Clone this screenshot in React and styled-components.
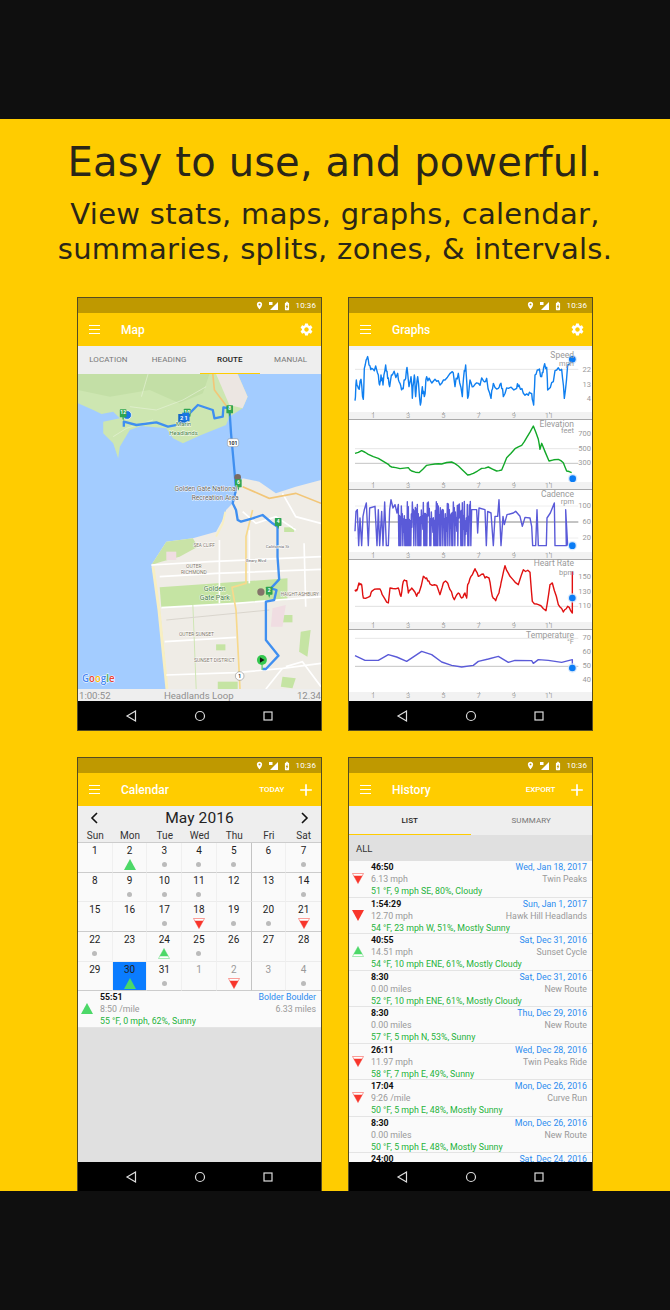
import React from "react";
import styled, { createGlobalStyle } from "styled-components";
import { MdSettings, MdAdd, MdLocationOn, MdBatteryChargingFull } from "react-icons/md";

const GlobalStyle = createGlobalStyle`
  html, body { margin: 0; padding: 0; background: #0f0f0f; }
  * { box-sizing: border-box; }
`;

/* ---------- data ---------- */

const CALENDAR = [
  [["1"], ["2", "up"], ["3", "dot"], ["4", "dot"], ["5", "dot"], ["6"], ["7", "dot"]],
  [["8"], ["9", "dot"], ["10", "dot"], ["11", "dot"], ["12"], ["13"], ["14", "dot"]],
  [["15"], ["16"], ["17", "dot"], ["18", "downOutline"], ["19", "dot"], ["20", "dot"], ["21", "downOutline"]],
  [["22", "dot"], ["23"], ["24", "upOutline"], ["25", "dot"], ["26"], ["27"], ["28"]],
  [["29"], ["30", "up"], ["31", "dot"], ["1", null, true], ["2", "downOutline", true], ["3", null, true], ["4", "dot", true]],
];

const HISTORY = [
  { time: "46:50", date: "Wed, Jan 18, 2017", pace: "6.13 mph", name: "Twin Peaks", weather: "51 °F, 9 mph SE, 80%, Cloudy", mark: "downOutline" },
  { time: "1:54:29", date: "Sun, Jan 1, 2017", pace: "12.70 mph", name: "Hawk Hill Headlands", weather: "54 °F, 23 mph W, 51%, Mostly Sunny", mark: "down" },
  { time: "40:55", date: "Sat, Dec 31, 2016", pace: "14.51 mph", name: "Sunset Cycle", weather: "54 °F, 10 mph ENE, 61%, Mostly Cloudy", mark: "upOutline" },
  { time: "8:30", date: "Sat, Dec 31, 2016", pace: "0.00 miles", name: "New Route", weather: "52 °F, 10 mph ENE, 61%, Mostly Cloudy" },
  { time: "8:30", date: "Thu, Dec 29, 2016", pace: "0.00 miles", name: "New Route", weather: "57 °F, 5 mph N, 53%, Sunny" },
  { time: "26:11", date: "Wed, Dec 28, 2016", pace: "11.97 mph", name: "Twin Peaks Ride", weather: "58 °F, 7 mph E, 49%, Sunny", mark: "downOutline" },
  { time: "17:04", date: "Mon, Dec 26, 2016", pace: "9:26 /mile", name: "Curve Run", weather: "50 °F, 5 mph E, 48%, Mostly Sunny", mark: "downOutline" },
  { time: "8:30", date: "Mon, Dec 26, 2016", pace: "0.00 miles", name: "New Route", weather: "50 °F, 5 mph E, 48%, Mostly Sunny" },
  { time: "24:00", date: "Sat, Dec 24, 2016", pace: "", name: "", weather: "" },
];

// adds small deterministic wobble between the traced points
const roughen = (points, amp, steps) => {
  const pts = points.split(" ").map((p) => p.split(",").map(Number));
  let seed = 31;
  const out = [];
  pts.forEach(([x, y], i) => {
    out.push(`${x},${y}`);
    if (i === pts.length - 1) return;
    const [nx, ny] = pts[i + 1];
    for (let s = 1; s <= steps; s++) {
      seed = (seed * 137 + 59) % 251;
      const t = s / (steps + 1);
      const off = ((seed % 21) / 10 - 1) * amp;
      out.push(`${x + (nx - x) * t},${y + (ny - y) * t + off}`);
    }
  });
  return out.join(" ");
};

// cadence drops to the floor all the time, so the first part is generated
const cadencePoints = () => {
  const pts = ["30,140 33,80 37,75 41,183 45,100 50,183 54,95 58,75 64,55 70,183 74,70 90,65 96,183 100,75 104,183 110,80 114,183 119,52 124,183 130,183 134,75 138,45 144,70 150,60 156,85"];
  let seed = 17;
  for (let x = 160; x < 378; x += 3) {
    seed = (seed * 137 + 59) % 251;
    const top = 50 + (seed % 60);
    const floor = seed % 3 !== 2;
    pts.push(`${x},${top}`);
    pts.push(`${x + 1.5},${floor ? 183 : top + 40}`);
  }
  pts.push("380,75 395,75 398,145 402,70 420,75 424,183 428,80 438,85 445,183 450,95 458,95 462,45 468,183 474,95 478,120 486,90 505,85 512,80 525,95 532,125 540,98 555,100 560,125 563,183 572,183 576,75 580,183 604,183 606,100 616,85 628,55 630,183 664,183 662,75 668,183");
  return pts.join(" ");
};

const GRAPHS = [
  {
    title: "Speed", unit: "mph", color: "#0f7ff0", top: 180, first: true,
    titleY: 195, unitY: 222, dot: [682, 208],
    lines: [[238, "#e6e6e6"]],
    labels: [["22", 240], ["13", 284], ["4", 328]],
    points: roughen("30,332 34,270 40,295 48,268 55,328 58,235 66,205 72,225 80,235 92,228 100,255 104,285 108,255 114,285 122,225 128,265 134,290 142,255 158,250 165,280 172,295 180,270 186,232 192,290 198,260 202,325 208,255 212,320 218,260 226,345 232,290 238,320 245,260 256,272 270,268 285,285 300,270 322,245 330,290 340,250 352,320 356,260 362,225 368,325 375,270 385,290 400,280 415,272 425,265 438,325 445,280 460,295 468,280 475,320 490,295 515,295 522,285 535,310 550,316 560,310 566,345 570,255 580,240 590,260 596,232 605,232 608,300 620,278 635,240 650,238 658,325 668,225 682,210", 12, 2),
  },
  {
    title: "Elevation", unit: "feet", color: "#12a828", top: 392,
    titleY: 403, unitY: 426, dot: [683, 568],
    lines: [[478, "#e6e6e6"], [522, "#c4c4c4"]],
    labels: [["700", 433], ["500", 478], ["300", 522]],
    points: roughen("30,492 50,484 70,495 100,507 130,525 140,533 165,538 190,535 200,545 222,550 245,528 270,524 290,524 320,518 340,530 368,557 385,552 410,537 430,533 455,545 470,542 485,505 510,478 530,468 545,445 565,410 580,450 585,480 590,462 612,515 640,510 655,520 665,545 680,550", 1.5, 1),
  },
  {
    title: "Cadence", unit: "rpm", color: "#5a5ad8", top: 16,
    titleY: 28, unitY: 52, dot: [682, 183],
    lines: [[64, "#eeeeee"], [112, "#888888"], [160, "#eeeeee"]],
    labels: [["100", 64], ["60", 112], ["20", 160]],
    points: cadencePoints(),
  },
  {
    title: "Heart Rate", unit: "bpm", color: "#e01010", top: 156,
    titleY: 166, unitY: 194, dot: [682, 270],
    lines: [[295, "#e0e0e0"]],
    labels: [["150", 207], ["130", 251], ["110", 295]],
    points: roughen("30,245 35,248 42,225 50,230 55,270 75,265 80,250 105,243 115,265 130,285 135,240 160,240 168,265 175,220 185,218 190,255 200,240 215,265 225,245 235,205 245,210 255,228 275,232 285,260 295,225 305,222 315,245 328,275 340,255 350,270 360,255 365,270 368,230 378,205 390,182 400,205 415,198 420,210 432,210 442,265 452,278 462,255 468,225 480,173 495,205 520,230 535,185 555,193 562,280 580,290 603,308 615,230 622,225 640,290 655,312 668,295 682,315", 4, 2) + " 682,190",
  },
  {
    title: "Temperature", unit: "°F", color: "#5a5ad8", top: 366,
    titleY: 381, unitY: 403, dot: [682, 480],
    lines: [[391, "#e6e6e6"], [475, "#c4c4c4"]],
    labels: [["70", 391], ["60", 433], ["50", 475], ["40", 515]],
    points: "30,443 60,457 100,457 130,440 155,447 185,460 230,430 260,440 290,462 320,472 350,477 385,472 400,460 430,453 460,445 490,463 510,457 560,458 565,466 580,455 610,457 650,463 682,455 682,480",
  },
];

/* ---------- small drawings ---------- */

const Triangle = ({ kind }) => {
  const up = kind.startsWith("up");
  const color = up ? "#4cd868" : "#f8352b";
  const outline = kind.endsWith("Outline");
  return (
    <svg width="12" height="11" viewBox="0 0 12 11">
      <g transform={up ? undefined : "rotate(180 6 5.5)"}>
        {outline && <polygon points="6,0.5 11.5,10.5 0.5,10.5" fill="#fff" stroke={color} strokeWidth="0.6" opacity="0.8" />}
        <polygon points={outline ? "6,0.5 10.3,8.2 1.7,8.2" : "6,0 12,11 0,11"} fill={color} />
      </g>
    </svg>
  );
};

const Status = () => (
  <StatusBar>
    <MdLocationOn size={9} />
    <svg width="10" height="8" viewBox="0 0 10 8">
      <polygon points="10,0 10,8 2,8" fill="#fff" />
      <rect x="1" y="0" width="3.5" height="3" fill="#fff" />
    </svg>
    <MdBatteryChargingFull size={10} />
    <StatusTime>10:36</StatusTime>
  </StatusBar>
);

const BottomNav = () => (
  <NavBar>
    <svg width="16" height="14" viewBox="0 0 16 14">
      <polygon points="12.5,2 12.5,12 4,7" fill="none" stroke="#ddd" strokeWidth="1.2" />
    </svg>
    <svg width="16" height="14" viewBox="0 0 16 14">
      <circle cx="8" cy="7" r="4.5" fill="none" stroke="#ddd" strokeWidth="1.2" />
    </svg>
    <svg width="16" height="14" viewBox="0 0 16 14">
      <rect x="4" y="3" width="8" height="8" fill="none" stroke="#ddd" strokeWidth="1.2" />
    </svg>
  </NavBar>
);

const Burger = () => (
  <BurgerBox>
    <span />
    <span />
    <span />
  </BurgerBox>
);

const MapMarker = ({ x, y, label, fill = "#2fa551" }) => (
  <g>
    <rect x={x - 10} y={y} width="20" height="24" rx="2" fill={fill} />
    <polygon points={`${x - 3},${y + 24} ${x + 3},${y + 24} ${x},${y + 34}`} fill={fill} />
    <text x={x} y={y + 15} fontSize="15" fontFamily="Roboto, sans-serif" fontWeight="700" fill="#fff" textAnchor="middle">{label}</text>
  </g>
);

const MapLabel = ({ x, y, color = "#5f5f5f", size = 18, children }) => (
  <text x={x} y={y} fontSize={size} fontFamily="Roboto, sans-serif" fill={color} stroke="#fff" strokeWidth="2.5" paintOrder="stroke" textAnchor="middle">{children}</text>
);

// drawn in 3x page units, same scale the route was measured at
const RouteMap = () => (
  <MapSvg viewBox="24 252 732 945" preserveAspectRatio="none">
    <rect x="24" y="252" width="732" height="945" fill="#a3ccff" />
    <polygon fill="#cde6b1" points="24,252 505,252 535,320 520,355 480,380 470,405 395,435 340,460 310,445 290,415 215,408 180,420 150,470 145,505 130,460 100,430 100,395 150,385 130,365 95,372 70,360 24,340" />
    <polygon fill="#c3dfa6" points="24,252 420,252 400,310 330,340 240,300 120,320 24,300" />
    <polygon fill="#ece6e2" points="440,252 505,252 535,320 520,355 480,345" />
    <g fill="none" stroke="#e6f2d6" strokeWidth="2">
      <polyline points="180,350 260,360 340,330 410,290" />
      <polyline points="130,440 170,415 250,390" />
      <polyline points="235,252 215,320" />
    </g>
    <polygon fill="#efece6" points="500,590 520,565 570,575 620,610 680,590 756,570 756,1197 290,1197 285,1100 270,950 245,825 290,755 370,745 440,725 465,680 470,660 490,640" />
    <polygon fill="#c9e3a7" points="245,825 290,755 370,745 385,770 330,800 275,815" />
    <polygon fill="#c5e4a3" points="270,892 655,865 655,930 275,953" />
    <polyline fill="none" stroke="#f8efc2" strokeWidth="9" points="250,830 268,960 282,1100 292,1197" />
    <polyline fill="none" stroke="#f8efc2" strokeWidth="6" points="440,740 460,700 468,665" />
    <g fill="#c5e4a3">
      <rect x="440" y="1063" width="28" height="18" />
      <rect x="445" y="1175" width="60" height="22" />
      <polygon points="695,1025 725,1020 715,1100 690,1085" />
      <polygon points="640,1160 680,1165 670,1195 635,1190" />
      <rect x="640" y="975" width="30" height="22" />
      <rect x="645" y="712" width="30" height="14" />
    </g>
    <g fill="#f0dde2">
      <polygon points="610,955 650,945 640,1010 605,1010" />
      <rect x="290" y="785" width="30" height="25" />
    </g>
    <g fill="none" stroke="#fff" strokeWidth="5">
      <polyline points="245,825 420,815 756,800" />
      <polyline points="270,860 440,850 756,838" />
      <polyline points="275,953 500,940 756,920" />
      <polyline points="285,1055 500,1042" />
      <polyline points="290,1155 500,1148 640,1135 756,1120" />
      <polyline points="450,750 450,940" />
      <polyline points="540,720 540,880" />
      <polyline points="705,760 710,950" />
      <polyline points="650,1130 700,1115 756,1190" />
      <polyline points="590,1197 640,1135" />
      <polyline points="640,610 680,680 756,700" />
      <polyline points="520,665 560,700 620,680 680,720" />
    </g>
    <polyline fill="none" stroke="#cfe6b5" strokeWidth="3" points="370,945 380,1197" />
    <polyline fill="none" stroke="#d9d5cd" strokeWidth="3" points="290,990 600,960" />
    <g fill="none" stroke="#f2c678" strokeWidth="5">
      <polyline points="430,252 435,300 480,360" />
      <polyline points="520,590 600,625 680,610 756,640" />
    </g>
    <polyline fill="none" stroke="#f7d98c" strokeWidth="5" points="550,660 530,740 530,880 488,892 500,960 512,1197" />
    <polyline fill="none" stroke="#3f8ff0" strokeWidth="7" strokeLinejoin="round" points="162,410 162,395 200,405 260,397 295,410 345,400 360,370 385,345 430,360 435,385 460,380 462,352 480,355 485,430 495,540 500,600 490,640 500,660 505,690 515,695 550,685 580,675 610,700 625,710 625,800 630,868 605,895 622,900 615,930 590,935 590,1050 628,1097 590,1137 580,1137" />
    <circle cx="172" cy="375" r="13" fill="#1976e3" stroke="#fff" strokeWidth="2" />
    <MapMarker x={160} y={358} label="12" />
    <MapMarker x={353} y={356} label="10" />
    <rect x="326" y="372" width="24" height="26" fill="#1567c6" />
    <rect x="338" y="368" width="22" height="26" fill="#1976e3" />
    <text x="343" y="390" fontSize="17" fontFamily="Roboto, sans-serif" fontWeight="700" fill="#fff" textAnchor="middle">2 1</text>
    <MapMarker x={481} y={346} label="8" />
    <circle cx="505" cy="562" r="10" fill="#7a6a62" />
    <MapMarker x={507} y={568} label="6" />
    <MapMarker x={627} y={684} label="4" />
    <MapMarker x={600} y={890} label="2" />
    <circle cx="575" cy="906" r="11" fill="#84736a" />
    <circle cx="578" cy="1110" r="15" fill="#35c84f" />
    <polygon points="572,1102 572,1118 586,1110" fill="#111" />
    <rect x="577" y="1124" width="3" height="16" fill="#35c84f" />
    <rect x="474" y="446" width="34" height="24" rx="7" fill="#fff" stroke="#888" strokeWidth="1.5" />
    <text x="491" y="464" fontSize="16" fontFamily="Roboto, sans-serif" fontWeight="700" fill="#333" textAnchor="middle">101</text>
    <circle cx="511" cy="1158" r="13" fill="#fff" stroke="#777" strokeWidth="1.5" />
    <text x="511" y="1164" fontSize="15" fontFamily="Roboto, sans-serif" fontWeight="700" fill="#333" textAnchor="middle">1</text>
    <MapLabel x={342} y={407} color="#3f7d3a">Marin</MapLabel>
    <MapLabel x={342} y={434} color="#3f7d3a">Headlands</MapLabel>
    <MapLabel x={409} y={603} size={20}>Golden Gate National</MapLabel>
    <MapLabel x={437} y={630} size={20}>Recreation Area</MapLabel>
    <MapLabel x={404} y={772} size={14} color="#7d7465">SEA CLIFF</MapLabel>
    <MapLabel x={373} y={834} size={15} color="#7d7465">OUTER</MapLabel>
    <MapLabel x={373} y={852} size={15} color="#7d7465">RICHMOND</MapLabel>
    <MapLabel x={560} y={817} size={13}>Geary Blvd</MapLabel>
    <MapLabel x={625} y={774} size={13}>California St</MapLabel>
    <MapLabel x={436} y={904} color="#3f7d3a" size={21}>Golden</MapLabel>
    <MapLabel x={436} y={931} color="#3f7d3a" size={21}>Gate Park</MapLabel>
    <MapLabel x={692} y={917} size={14} color="#7d7465">HAIGHT-ASHBURY</MapLabel>
    <MapLabel x={381} y={1038} size={15} color="#7d7465">OUTER SUNSET</MapLabel>
    <MapLabel x={435} y={1115} size={15} color="#7d7465">SUNSET DISTRICT</MapLabel>
    <text x="36" y="1175" fontSize="30" fontFamily="'Open Sans', sans-serif" fontWeight="600" stroke="#fff" strokeWidth="3" paintOrder="stroke" textLength="98" lengthAdjust="spacingAndGlyphs">
      <tspan fill="#4285f4">G</tspan>
      <tspan fill="#ea4335">o</tspan>
      <tspan fill="#fbbc05">o</tspan>
      <tspan fill="#4285f4">g</tspan>
      <tspan fill="#34a853">l</tspan>
      <tspan fill="#ea4335">e</tspan>
    </text>
  </MapSvg>
);

const Graph = ({ title, unit, color, top, first, titleY, unitY, dot, lines, labels, points }) => (
  <GraphPanel $first={first}>
    <Plot>
      <svg width="244" height="62" viewBox={`12 ${top} 732 186`} preserveAspectRatio="none">
        {lines.map(([y, c]) => (
          <line key={y} x1="30" x2="700" y1={y} y2={y} stroke={c} strokeWidth="3" />
        ))}
        <polyline points={points} fill="none" stroke={color} strokeWidth="4.2" strokeLinejoin="round" />
        <circle cx={dot[0]} cy={dot[1]} r="14" fill="#cfe3fb" opacity="0.8" />
        <circle cx={dot[0]} cy={dot[1]} r="10" fill="#0a7cf5" />
      </svg>
      <PlotTitle style={{ top: (titleY - top) / 3 }}>{title}</PlotTitle>
      <PlotTitle style={{ top: (unitY - top) / 3 }} $small>{unit}</PlotTitle>
      {labels.map(([text, y]) => (
        <AxisValue key={text} style={{ top: (y - top) / 3 }}>{text}</AxisValue>
      ))}
    </Plot>
    <AxisStrip>
      {["1", "3", "5", "7", "9", "11"].map((n) => (
        <AxisTick key={n}>{n}</AxisTick>
      ))}
    </AxisStrip>
  </GraphPanel>
);

const ActivityRow = ({ time, date, pace, name, weather, mark }) => (
  <Row>
    <RowMark>{mark && <Triangle kind={mark} />}</RowMark>
    <RowLine>
      <Time>{time}</Time>
      <DateText>{date}</DateText>
    </RowLine>
    <RowLine>
      <Muted>{pace}</Muted>
      <Muted>{name}</Muted>
    </RowLine>
    <Weather>{weather}</Weather>
  </Row>
);

const MapScreen = () => (
  <Phone>
    <Status />
    <AppBar>
      <Burger />
      <AppTitle>Map</AppTitle>
      <AppActions>
        <GearIcon size={15} color="#fff" />
      </AppActions>
    </AppBar>
    <Tabs $height={28}>
      <Tab>LOCATION</Tab>
      <Tab>HEADING</Tab>
      <Tab $active>ROUTE</Tab>
      <Tab>MANUAL</Tab>
    </Tabs>
    <MapArea>
      <RouteMap />
    </MapArea>
    <MapFooter>
      <span>1:00:52</span>
      <FooterName>Headlands Loop</FooterName>
      <span>12.34</span>
    </MapFooter>
    <BottomNav />
  </Phone>
);

const GraphsScreen = () => (
  <Phone>
    <Status />
    <AppBar>
      <Burger />
      <AppTitle>Graphs</AppTitle>
      <AppActions>
        <GearIcon size={15} color="#fff" />
      </AppActions>
    </AppBar>
    <GraphList>
      {GRAPHS.map((g) => (
        <Graph key={g.title} {...g} />
      ))}
    </GraphList>
    <BottomNav />
  </Phone>
);

const CalendarScreen = () => (
  <Phone>
    <Status />
    <AppBar>
      <Burger />
      <AppTitle>Calendar</AppTitle>
      <AppActions>
        <ActionText>TODAY</ActionText>
        <MdAdd size={20} color="#fff" />
      </AppActions>
    </AppBar>
    <MonthHeader>
      <svg width="8" height="12" viewBox="0 0 8 12">
        <polyline points="7,1 2,6 7,11" fill="none" stroke="#111" strokeWidth="1.6" />
      </svg>
      <MonthName>May 2016</MonthName>
      <svg width="8" height="12" viewBox="0 0 8 12">
        <polyline points="1,1 6,6 1,11" fill="none" stroke="#111" strokeWidth="1.6" />
      </svg>
    </MonthHeader>
    <WeekHeader>
      {["Sun", "Mon", "Tue", "Wed", "Thu", "Fri", "Sat"].map((d) => (
        <span key={d}>{d}</span>
      ))}
    </WeekHeader>
    <CalGrid>
      {CALENDAR.map((week, r) =>
        week.map(([day, mark, muted], c) => (
          <Cell key={`${r}-${c}`} $strongBottom={r % 2 === 0} $col={c} $selected={day === "30"}>
            <CellDay $muted={muted}>{day}</CellDay>
            <CellMark>{mark === "dot" ? <Dot /> : mark && <Triangle kind={mark} />}</CellMark>
          </Cell>
        ))
      )}
    </CalGrid>
    <ActivityRow
      time="55:51"
      date="Bolder Boulder"
      pace="8:50 /mile"
      name="6.33 miles"
      weather="55 °F, 0 mph, 62%, Sunny"
      mark="up"
    />
    <Filler />
    <BottomNav />
  </Phone>
);

const HistoryScreen = () => (
  <Phone>
    <Status />
    <AppBar>
      <Burger />
      <AppTitle>History</AppTitle>
      <AppActions>
        <ActionText>EXPORT</ActionText>
        <MdAdd size={20} color="#fff" />
      </AppActions>
    </AppBar>
    <Tabs $height={29}>
      <Tab $active>LIST</Tab>
      <Tab>SUMMARY</Tab>
    </Tabs>
    <FilterBar>ALL</FilterBar>
    <HistoryList>
      {HISTORY.map((h, i) => (
        <ActivityRow key={i} {...h} />
      ))}
    </HistoryList>
    <BottomNav />
  </Phone>
);

export default function App() {
  return (
    <Page>
      <GlobalStyle />
      <Band />
      <Main>
        <Headline>Easy to use, and powerful.</Headline>
        <Subhead>
          View stats, maps, graphs, calendar,
          <br />
          summaries, splits, zones, &amp; intervals.
        </Subhead>
        <PhoneGrid>
          <MapScreen />
          <GraphsScreen />
          <CalendarScreen />
          <HistoryScreen />
        </PhoneGrid>
      </Main>
      <Band />
    </Page>
  );
}

/* ---------- styles ---------- */

const Page = styled.div`
  width: 670px;
  height: 1310px;
  display: flex;
  flex-direction: column;
  overflow: hidden;
  font-family: Roboto, sans-serif;
`;
const Band = styled.div`
  height: 119px;
  flex: none;
  background: #0f0f0f;
`;
const Main = styled.div`
  height: 1072px;
  flex: none;
  background: #ffcc00;
  display: flex;
  flex-direction: column;
  align-items: center;
  padding-top: 18px;
  overflow: hidden;
`;
const Headline = styled.h1`
  margin: 0;
  font-family: "DejaVu Sans", sans-serif;
  font-weight: 400;
  font-size: 40px;
  line-height: 50px;
  letter-spacing: 0.15px;
  color: #2a2618;
  white-space: nowrap;
`;
const Subhead = styled.h2`
  margin: 0;
  padding-top: 10px;
  font-family: "DejaVu Sans", sans-serif;
  font-weight: 400;
  font-size: 29px;
  line-height: 35px;
  letter-spacing: 0.3px;
  text-align: center;
  color: #2a2618;
  white-space: nowrap;
`;
// second row runs past the yellow band and gets cut off there
const PhoneGrid = styled.div`
  margin-top: 30px;
  display: grid;
  grid-template-columns: 245px 245px;
  grid-template-rows: 434px 435px;
  gap: 26px;
  flex: none;
`;
const Phone = styled.div`
  display: flex;
  flex-direction: column;
  border: 1px solid #544b22;
  overflow: hidden;
  background: #fff;
`;
const StatusBar = styled.div`
  height: 15px;
  flex: none;
  background: #bf9900;
  color: #fff;
  display: flex;
  align-items: center;
  justify-content: flex-end;
  gap: 4px;
  padding-right: 5px;
`;
const StatusTime = styled.span`
  font-size: 8px;
  font-weight: 400;
  letter-spacing: 0.1px;
`;
const AppBar = styled.div`
  height: 33px;
  flex: none;
  background: #ffcc00;
  display: flex;
  align-items: center;
  padding: 0 5px 0 11px;
`;
const BurgerBox = styled.div`
  width: 11px;
  display: flex;
  flex-direction: column;
  gap: 2.8px;
  span {
    display: block;
    height: 1px;
    background: #fff;
  }
`;
const AppTitle = styled.div`
  margin-left: 21px;
  color: #fff;
  font-size: 12px;
  font-weight: 500;
`;
const AppActions = styled.div`
  margin-left: auto;
  display: flex;
  align-items: center;
  gap: 11.5px;
`;
const GearIcon = styled(MdSettings)`
  margin-right: 2.5px;
`;
const ActionText = styled.span`
  color: #fff;
  font-size: 8px;
  font-weight: 500;
`;
const Tabs = styled.div`
  height: ${(p) => p.$height}px;
  flex: none;
  display: flex;
  background: #eeeeee;
`;
const Tab = styled.div`
  flex: 1;
  display: flex;
  align-items: center;
  justify-content: center;
  font-size: 8px;
  letter-spacing: 0.1px;
  color: ${(p) => (p.$active ? "#222" : "#777")};
  font-weight: ${(p) => (p.$active ? 500 : 400)};
  border-bottom: 1px solid ${(p) => (p.$active ? "#ffcc00" : "transparent")};
`;
const MapArea = styled.div`
  height: 315px;
  flex: none;
  overflow: hidden;
`;
const MapSvg = styled.svg`
  display: block;
  width: 100%;
  height: 100%;
`;
const MapFooter = styled.div`
  height: 12px;
  flex: none;
  background: #eeeeee;
  display: flex;
  justify-content: space-between;
  align-items: center;
  padding-left: 1px;
  font-size: 9.6px;
  color: #8e8e8e;
  white-space: nowrap;
`;
const FooterName = styled.span`
  margin-right: 10px;
`;
const NavBar = styled.div`
  height: 29px;
  flex: none;
  background: #000;
  display: flex;
  align-items: center;
  justify-content: center;
  gap: 52.5px;
`;
const GraphList = styled.div`
  flex: 1;
  min-height: 0;
  display: flex;
  flex-direction: column;
  background: #f2f2f2;
`;
const GraphPanel = styled.div`
  flex: none;
  padding-top: ${(p) => (p.$first ? "4px" : "0")};
`;
const Plot = styled.div`
  position: relative;
  height: 62px;
  background: #fff;
  svg {
    display: block;
  }
`;
const PlotTitle = styled.span`
  position: absolute;
  right: 18px;
  transform: translateY(-50%);
  font-size: ${(p) => (p.$small ? "7.5px" : "8.5px")};
  line-height: 1;
  color: #9a9a9a;
  white-space: nowrap;
`;
const AxisValue = styled.span`
  position: absolute;
  right: 1px;
  transform: translateY(-50%);
  font-size: 7.5px;
  line-height: 1;
  color: #9a9a9a;
`;
const AxisStrip = styled.div`
  height: 8px;
  display: flex;
  padding-left: 6.4px;
  background: #f2f2f2;
  border-bottom: 1px solid #aaa;
  overflow: hidden;
  ${GraphPanel}:last-child & {
    border-bottom: none;
  }
`;
const AxisTick = styled.span`
  position: relative;
  width: 35.2px;
  text-align: center;
  font-size: 7.5px;
  line-height: 8px;
  color: #aaa;
  &::before {
    content: "";
    position: absolute;
    left: 50%;
    top: 0;
    width: 1px;
    height: 2px;
    background: #bbb;
  }
`;
const MonthHeader = styled.div`
  height: 24px;
  flex: none;
  background: #eeeeee;
  display: flex;
  align-items: center;
  justify-content: space-between;
  padding: 0 12px;
`;
const MonthName = styled.div`
  font-size: 15.5px;
  letter-spacing: 0.1px;
  color: #222;
`;
const WeekHeader = styled.div`
  height: 13px;
  flex: none;
  background: #eeeeee;
  display: grid;
  grid-template-columns: repeat(7, 1fr);
  font-size: 10px;
  line-height: 11px;
  color: #333;
  text-align: center;
  border-bottom: 1px solid #ccc;
`;
const CalGrid = styled.div`
  flex: none;
  display: grid;
  grid-template-columns: repeat(7, 1fr);
  grid-auto-rows: 29.7px;
  background: #fafafa;
`;
const Cell = styled.div`
  display: flex;
  flex-direction: column;
  align-items: center;
  padding-top: 2px;
  background: ${(p) => (p.$selected ? "#0a7cff" : "transparent")};
  border-right: ${(p) =>
    p.$col === 6 ? "none" : `1px solid ${p.$col === 4 ? "#c4c4c4" : "#f0f0f0"}`};
  border-bottom: 1px solid ${(p) => (p.$strongBottom ? "#cccccc" : "#ececec")};
`;
const CellDay = styled.span`
  font-size: 10px;
  line-height: 11px;
  color: ${(p) => (p.$muted ? "#999" : "#222")};
`;
const CellMark = styled.div`
  height: 13px;
  margin-top: 2px;
  display: flex;
  align-items: center;
  justify-content: center;
`;
const Dot = styled.span`
  width: 5px;
  height: 5px;
  border-radius: 50%;
  background: #bbbbbb;
`;
const Row = styled.div`
  position: relative;
  flex: none;
  height: 36.5px;
  padding: 0 5px 0 22px;
  background: #fafafa;
  border-bottom: 1px solid #e4e4e4;
  font-size: 8.8px;
  line-height: 12px;
  white-space: nowrap;
`;
const RowMark = styled.div`
  position: absolute;
  left: 3px;
  top: 12px;
  display: flex;
`;
const RowLine = styled.div`
  display: flex;
  justify-content: space-between;
`;
const Time = styled.span`
  font-weight: 700;
  color: #111;
`;
const DateText = styled.span`
  color: #2b8cf0;
`;
const Muted = styled.span`
  color: #999;
`;
const Weather = styled.div`
  color: #1fb33a;
`;
const Filler = styled.div`
  flex: 1;
  background: #e0e0e0;
`;
const FilterBar = styled.div`
  height: 26px;
  flex: none;
  background: #e0e0e0;
  display: flex;
  align-items: center;
  padding-left: 7px;
  font-size: 9.5px;
  color: #333;
`;
const HistoryList = styled.div`
  flex: 1;
  min-height: 0;
  overflow: hidden;
`;
